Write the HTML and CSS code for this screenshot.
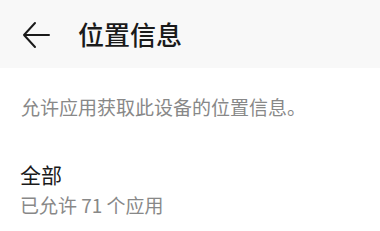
FILE: index.html
```html
<!doctype html>
<html lang="zh-CN">
<head>
    <meta charset="UTF-8">
    <meta name="viewport" content="width=device-width, initial-scale=1.0">
    <title>位置信息</title>
    <link rel="stylesheet" href="styles.css">
</head>
<body>
    <div class="header">
        <svg class="back" width="28" height="28" viewBox="0 0 28 28">
            <path d="M27 14 H2 M13 2 L2 14 L13 26" fill="none" stroke="#1a1a1a" stroke-width="2" stroke-linecap="round" stroke-linejoin="round"/>
        </svg>
        <h1 class="title">位置信息</h1>
    </div>
    <p class="desc">允许应用获取此设备的位置信息。</p>
    <div class="item">
        <div class="item-title">全部</div>
        <div class="item-sub">已允许 71 个应用</div>
    </div>
</body>
</html>
```

FILE: styles.css
```css
body{
    margin: 0;
    padding: 0;
    background: #ffffff;
    font-family: "Noto Sans CJK SC", "Noto Sans", sans-serif;
}
.header{
    display: flex;
    align-items: center;
    height: 68px;
    padding-left: 22px;
    background: #f8f8f8;
}
.back{
    display: block;
    margin-top: 2px;
}
.title{
    margin: 0 0 0 28px;
    font-size: 26px;
    font-weight: 500;
    line-height: 34px;
    color: #1a1a1a;
}
.desc{
    margin: 0;
    padding: 27px 20px 0 21px;
    font-size: 19px;
    line-height: 24px;
    color: #888888;
}
.item{
    padding: 41px 20px 0 20px;
}
.item-title{
    font-size: 21px;
    line-height: 28px;
    color: #1a1a1a;
}
.item-sub{
    margin-top: 5px;
    font-size: 19px;
    line-height: 24px;
    color: #888888;
}
```
